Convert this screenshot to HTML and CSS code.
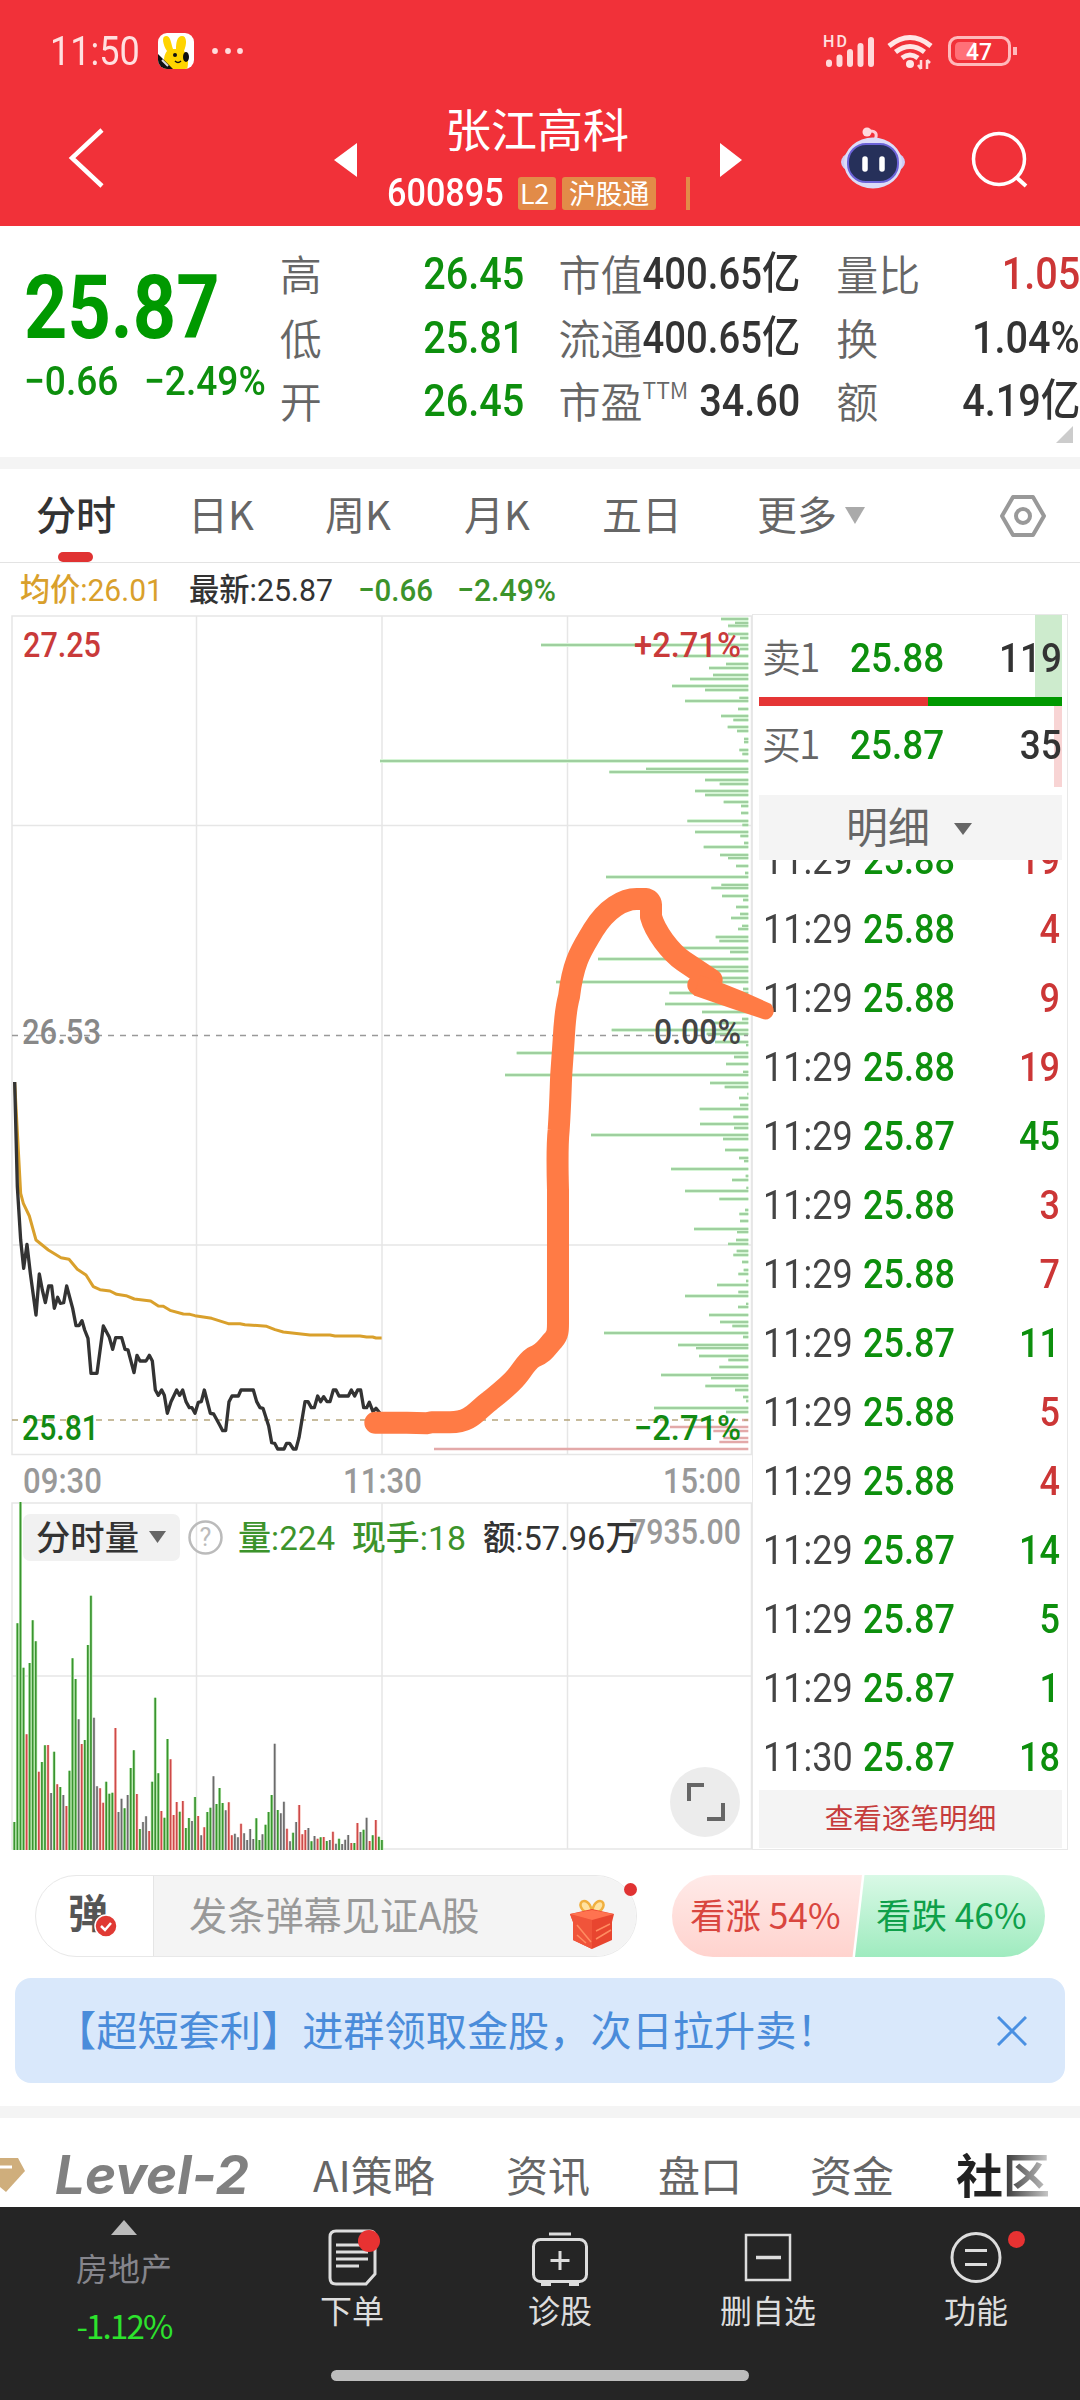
FILE: index.html
```html
<!DOCTYPE html>
<html lang="zh-CN">
	<head>
		<title>张江高科 600895</title>
		<meta charset="utf-8">
		<link rel="stylesheet" href="styles.css">
	</head>
	<body>
		<header class="top">
			<div class="status">
				<span class="num clock">11:50</span>
				<svg class="app-icon" viewBox="0 0 36 36" width="36" height="36">
					<clipPath id="appClip"><rect width="36" height="36" rx="9"/></clipPath>
					<g clip-path="url(#appClip)">
						<rect width="36" height="36" fill="#fff"/>
						<path d="M7 36C5 27 6 22 9 18 5 12 3 3 8 3c5 0 5 8 7 13h3c0-6 1-13 6-13 5 0 5 8 2 15 4 4 5 12 3 18z" fill="#ffd400"/>
						<path d="M0 21l15 15H0z" fill="#111"/>
						<path d="M4 27l6 6" stroke="#ddd" stroke-width="2"/>
						<ellipse cx="28" cy="24" rx="3" ry="5" fill="#111"/>
						<circle cx="17" cy="22" r="2" fill="#111"/>
						<path d="M17 28q3 3 6 0" stroke="#111" stroke-width="1.5" fill="none"/>
					</g>
				</svg>
				<svg class="more-dots" viewBox="0 0 32 6" width="32" height="6"><g fill="#ffdcdc"><circle cx="3" cy="3" r="2.9"/><circle cx="16" cy="3" r="2.9"/><circle cx="28" cy="3" r="2.9"/></g></svg>
				<svg class="signals" viewBox="822 30 198 42" width="198" height="42">
					<text x="823" y="47" class="hd" textLength="24">HD</text>
					<g stroke="#ffd9da" stroke-width="6" stroke-linecap="round">
						<path d="M829 62.500v1.500M839.500 57.500v6.500M850 52v12M860.500 46v18M871 40v24"/>
					</g>
					<g fill="none" stroke="#ffe6e6" stroke-width="5">
						<path d="M889 46q21-17 42 0M895.500 52q14.500-11 29 0M902 58q8-6 16 0"/>
					</g>
					<circle cx="910" cy="64" r="4" fill="#ffe6e6"/>
					<path d="M921 60v9M918 65l3 4M927 69v-9M930 63l-3-3" stroke="#ffd9da" stroke-width="2.500" fill="none"/>
					<rect x="949.500" y="37.500" width="60" height="27" rx="8" fill="none" stroke="#ffb9bb" stroke-width="3"/>
					<path d="M960 42h15v18h-15q-5 0-5-5v-8q0-5 5-5z" fill="#ff7078"/>
					<path d="M1015 47v8" stroke="#ffb9bb" stroke-width="4"/>
					<text x="966" y="59.500" class="batt" textLength="26" lengthAdjust="spacingAndGlyphs">47</text>
				</svg>
			</div>
			<div class="nav">
				<svg class="back" viewBox="0 0 40 64" width="40" height="64"><path d="M35 4L5 32 35 60" fill="none" stroke="#fff" stroke-width="4.500"/></svg>
				<svg class="prev" viewBox="0 0 24 34" width="24" height="34"><path d="M23 0v34L0 17z" fill="#fff"/></svg>
				<div class="stock">
					<h1>张江高科</h1>
					<div class="code">
						<span class="num">600895</span>
						<i class="tag tag-l2">L2</i>
						<i class="tag">沪股通</i>
						<i class="tag-cut"></i>
					</div>
				</div>
				<svg class="next" viewBox="0 0 24 34" width="24" height="34"><path d="M1 0v34l22-17z" fill="#fff"/></svg>
				<svg class="robot" viewBox="0 0 66 64" width="66" height="64">
					<path d="M35 14q4-9-5-9" fill="none" stroke="#ffcdd6" stroke-width="3"/>
					<circle cx="27" cy="6" r="4.500" fill="#ffd9de"/>
					<ellipse cx="33" cy="36" rx="32" ry="15" fill="#cfcdf5"/>
					<ellipse cx="33" cy="37" rx="29" ry="25.500" fill="#dcdcf8"/>
					<rect x="8" y="18" width="50" height="38" rx="18" fill="#26305a" stroke="#6c63d8" stroke-width="2"/>
					<path d="M25 33v10M42 33v10" stroke="#fff" stroke-width="5.500" stroke-linecap="round"/>
				</svg>
				<svg class="search" viewBox="0 0 60 60" width="60" height="60"><circle cx="28" cy="29" r="25.500" fill="none" stroke="#fff" stroke-width="3.500"/><path d="M45 47l10 9" stroke="#fff" stroke-width="4"/></svg>
			</div>
		</header>

		<section class="quote">
			<div class="price green">
				<div class="num last">25.87</div>
				<div class="change"><span class="num">−0.66</span><span class="num">−2.49%</span></div>
			</div>
			<dl class="col col-1">
				<div><dt>高</dt><dd class="num green">26.45</dd></div>
				<div><dt>低</dt><dd class="num green">25.81</dd></div>
				<div><dt>开</dt><dd class="num green">26.45</dd></div>
			</dl>
			<dl class="col col-2">
				<div><dt>市值</dt><dd class="num">400.65亿</dd></div>
				<div><dt>流通</dt><dd class="num">400.65亿</dd></div>
				<div><dt>市盈<sup>TTM</sup></dt><dd class="num">34.60</dd></div>
			</dl>
			<dl class="col col-3">
				<div><dt>量比</dt><dd class="num red">1.05</dd></div>
				<div><dt>换</dt><dd class="num">1.04%</dd></div>
				<div><dt>额</dt><dd class="num">4.19亿</dd></div>
			</dl>
			<i class="corner"></i>
		</section>
		<div class="band"></div>

		<nav class="periods">
			<span class="p active">分时</span>
			<span class="p">日K</span>
			<span class="p">周K</span>
			<span class="p">月K</span>
			<span class="p">五日</span>
			<span class="p">更多<i class="caret"></i></span>
			<svg class="gear" viewBox="0 0 46 44" width="46" height="44"><path d="M13 3h20l11 19-11 19H13L2 22z" fill="none" stroke="#999" stroke-width="4" stroke-linejoin="round"/><circle cx="23" cy="22" r="7" fill="none" stroke="#999" stroke-width="4"/></svg>
		</nav>

		<div class="legend">
			<svg viewBox="0 564 1080 50" width="1080" height="50">
				<g class="t" font-size="32">
					<g class="cjk-light"><text x="20" y="602" textLength="143" fill="#d9a02c">均价:26.01</text>
					<text x="189" y="602" textLength="144" fill="#333">最新:25.87</text></g>
					<text x="358" y="602" textLength="75" fill="#3c932b">−0.66</text>
					<text x="457" y="602" textLength="99" fill="#3c932b">−2.49%</text>
				</g>
			</svg>
		</div>

		<main class="market">
			<svg class="chart" viewBox="0 614 752 1236" width="752" height="1236">
				<g class="grid">
					<rect x="12" y="616" width="739.500" height="838.500"/>
					<rect x="12" y="1503" width="739.500" height="346"/>
					<path d="M196.500 616v838.500M382 616v838.500M567.500 616v838.500M12 825.500h740M12 1245h740"/>
					<path d="M196.500 1503v346M382 1503v346M567.500 1503v346M12 1676h740"/>
				</g>
				<g id="depth" transform="translate(360 600) scale(.33333)"></g>
				<path d="M12 1035.500H748" class="dash" stroke="#999"/>
				<path d="M12 1420H748" class="dash" stroke="#b5a57c"/>
				<g transform="translate(0 1060) scale(.33333)" class="lines">
					<path stroke="#d9a02c" stroke-width="9" d="M44 66 62 400 70 430 88 468 108 540 145 570 183 593 207 598 232 628 258 645 280 680 300 689 330 693 350 703 378 707 403 717 452 723 475 738 490 739 510 751 550 762 570 763 585 767 635 775 685 791 720 791 735 794 800 799 825 809 850 816 930 825 990 825 1005 828 1080 828 1100 831 1118 831 1128 834 1145 834"/>
					<path stroke="#333" stroke-width="10" d="M44 66 52 380 62 540 71 625 81 553 91 640 108 765 118 642 127 690 136 728 146 678 155 678 163 745 173 712 181 730 191 728 200 678 218 745 228 797 237 797 246 782 254 810 264 835 273 940 291 940 310 798 328 832 338 868 347 833 365 833 375 868 384 870 402 938 411 886 420 903 438 903 448 886 457 903 466 990 475 1006 485 990 493 1006 502 1060 513 1025 530 990 539 1006 548 990 558 1025 568 1043 576 1043 585 1060 595 1027 604 1025 613 990 631 1060 641 1062 659 1095 668 1112 677 1112 687 1025 696 1008 715 1008 723 990 760 990 770 1025 780 1043 789 1045 806 1098 815 1148 824 1150 833 1167 852 1167 860 1150 869 1150 880 1167 888 1167 897 1133 915 1025 924 1025 934 1043 943 1043 953 1008 962 1025 971 1010 981 1025 990 1025 1000 990 1008 990 1017 1008 1045 1008 1054 990 1064 1008 1073 990 1082 990 1091 1043 1100 1043 1108 1027 1119 1055 1128 1045 1140 1060"/>
				</g>
				<g id="volume" transform="translate(0 1480) scale(.33333)"></g>
				<g class="t" font-size="35">
					<text x="23" y="657" textLength="78" fill="#c93a3a">27.25</text>
					<text x="634" y="657" textLength="107" fill="#c93a3a">+2.71%</text>
					<text x="22" y="1044" textLength="79" fill="#888">26.53</text>
					<text x="654" y="1044" textLength="87" fill="#444">0.00%</text>
					<text x="22" y="1440" textLength="77" fill="#128a12">25.81</text>
					<text x="634" y="1440" textLength="107" fill="#128a12">−2.71%</text>
				</g>
				<g class="t" font-size="35" fill="#999">
					<text x="23" y="1493" textLength="79">09:30</text>
					<text x="343" y="1493" textLength="79">11:30</text>
					<text x="663" y="1493" textLength="78">15:00</text>
					<text x="629" y="1544" textLength="112">7935.00</text>
				</g>
				<rect x="23" y="1514" width="157" height="47" rx="7" fill="#f1f1f1"/>
				<path d="M149 1531h17l-8.500 12z" fill="#666"/>
				<circle cx="205.500" cy="1537.500" r="16" fill="none" stroke="#bbb" stroke-width="2.500"/>
				<text x="205.500" y="1546" class="help">?</text>
				<g class="t cjk-light" font-size="34">
					<text x="36" y="1550" textLength="103" fill="#333">分时量</text>
					<text x="238" y="1550" textLength="97" fill="#3c932b">量:224</text>
					<text x="352" y="1550" textLength="114" fill="#3c932b">现手:18</text>
					<text x="483" y="1550" textLength="155" fill="#333">额:57.96万</text>
				</g>
				<circle cx="705" cy="1802" r="35" fill="#ececec"/>
				<path d="M689 1801v-16h15M723 1803v16h-16" fill="none" stroke="#666" stroke-width="4"/>
			</svg>

			<aside class="book">
				<div class="level sell"><b>卖1</b><span class="num green">25.88</span><em class="num">119</em></div>
				<div class="ratio"></div>
				<div class="level buy"><b>买1</b><span class="num green">25.87</span><em class="num">35</em></div>
				<div class="detail">明细<i class="caret"></i></div>
				<div class="trades">
					<div class="trade"><span class="num">11:29</span><span class="num green">25.88</span><span class="num red">19</span></div>
					<div class="trade"><span class="num">11:29</span><span class="num green">25.88</span><span class="num red">4</span></div>
					<div class="trade"><span class="num">11:29</span><span class="num green">25.88</span><span class="num red">9</span></div>
					<div class="trade"><span class="num">11:29</span><span class="num green">25.88</span><span class="num red">19</span></div>
					<div class="trade"><span class="num">11:29</span><span class="num green">25.87</span><span class="num green">45</span></div>
					<div class="trade"><span class="num">11:29</span><span class="num green">25.88</span><span class="num red">3</span></div>
					<div class="trade"><span class="num">11:29</span><span class="num green">25.88</span><span class="num red">7</span></div>
					<div class="trade"><span class="num">11:29</span><span class="num green">25.87</span><span class="num green">11</span></div>
					<div class="trade"><span class="num">11:29</span><span class="num green">25.88</span><span class="num red">5</span></div>
					<div class="trade"><span class="num">11:29</span><span class="num green">25.88</span><span class="num red">4</span></div>
					<div class="trade"><span class="num">11:29</span><span class="num green">25.87</span><span class="num green">14</span></div>
					<div class="trade"><span class="num">11:29</span><span class="num green">25.87</span><span class="num green">5</span></div>
					<div class="trade"><span class="num">11:29</span><span class="num green">25.87</span><span class="num green">1</span></div>
					<div class="trade"><span class="num">11:30</span><span class="num green">25.87</span><span class="num green">18</span></div>
				</div>
				<div class="all-trades">查看逐笔明细</div>
			</aside>

			<!-- marker line drawn by hand over the chart -->
			<svg class="marker" viewBox="0 614 1080 1236" width="1080" height="1236">
				<g transform="translate(360 1040) scale(.33333)">
					<path d="M46 1148H140L200 1150 215 1147H270C335 1147 350 1110 390 1082 420 1058 450 1035 470 1010 490 985 500 965 520 952 555 938 560 920 580 900 594 885 594 870 594 850V450C592 380 593 300 596 270 602 180 602 130 604 100L611 0C613-40 616-90 627-130 640-240 665-270 700-330 740-395 790-423 830-423H855Q872-421 873-405V-370C885-325 930-265 970-237L1055-180 1015-165"/>
				</g>
				<path d="M700 975L722 983 742 991 771 1004Q777 1012 770 1018 766 1021 760 1018L730 1008 694 995.500z" fill="#ff7b45"/>
			</svg>
		</main>

		<section class="social">
			<div class="danmu">
				<div class="danmu-switch">弹
					<svg viewBox="0 0 24 24" width="24" height="24"><circle cx="12" cy="12" r="11" fill="#e03a34" stroke="#fff" stroke-width="1.500"/><path d="M7 12l4 4 6-7" fill="none" stroke="#fff" stroke-width="2.500"/></svg>
				</div>
				<div class="danmu-input">发条弹幕见证A股</div>
				<svg class="gift" viewBox="0 0 46 52" width="46" height="52">
					<path d="M23 14C10 14 9 2 15 2c5 0 8 7 8 12zM23 14C36 14 37 2 31 2c-5 0-8 7-8 12z" fill="#ffe2a0" stroke="#f0b040" stroke-width="2.500"/>
					<path d="M1 15l22-5 22 5-2 8v18L23 50 4 41V23z" fill="#e8452f"/>
					<path d="M1 15l22 6v29L4 41V23z" fill="#f0543a"/>
					<path d="M1 15l22-4 22 4-22 6z" fill="#ff7350"/>
					<path d="M8 26l14 17M8 36l9 8M27 32l14-7M27 40l15-9" stroke="#ff8b60" stroke-width="1.500"/>
				</svg>
				<i class="dot"></i>
			</div>
			<div class="vote"><span class="up">看涨 54%</span><span class="down">看跌 46%</span></div>
		</section>

		<div class="banner">
			<span>【超短套利】进群领取金股，次日拉升卖！</span>
			<svg viewBox="0 0 30 30" width="30" height="30"><path d="M1 1l28 28M29 1L1 29" stroke="#4a90e2" stroke-width="3"/></svg>
		</div>
		<div class="band"></div>

		<nav class="sections">
			<svg class="diamond" viewBox="0 0 26 36" width="26" height="36"><path d="M0 1h18l7 13L6 35 0 30z" fill="#cfae7c"/><path d="M0 10h12" stroke="#fff" stroke-width="3"/></svg>
			<b class="level2">Level-2</b>
			<span>AI策略</span>
			<span>资讯</span>
			<span>盘口</span>
			<span>资金</span>
			<strong>社区</strong>
		</nav>

		<footer class="bottom">
			<div class="item sector">
				<i class="up-caret"></i>
				<span>房地产</span>
				<em>-1.12%</em>
			</div>
			<div class="item">
				<svg viewBox="0 0 60 60" width="60" height="60"><g fill="none" stroke="#ddd" stroke-width="3"><path d="M14 4h34q5 0 5 5v38l-9 10H14q-6 0-6-6V10q0-6 6-6z"/><path d="M14 18h32M14 25h32M14 32h32M14 39h23"/></g></svg>
				<i class="badge big"></i>
				<span>下单</span>
			</div>
			<div class="item">
				<svg viewBox="0 0 60 60" width="60" height="60"><g fill="none" stroke="#ddd" stroke-width="3"><path d="M19 7h22"/><rect x="3.500" y="12.500" width="53" height="42" rx="7"/><path d="M30 24v19M20.500 33.500h19"/><path d="M11 57h10M39 57h10" stroke-width="4"/></g></svg>
				<span>诊股</span>
			</div>
			<div class="item">
				<svg viewBox="0 0 60 60" width="60" height="60"><g fill="none" stroke="#ddd" stroke-width="2.500"><rect x="8" y="8" width="44" height="45"/><path d="M18 30.500h25" stroke-width="3.500"/></g></svg>
				<span>删自选</span>
			</div>
			<div class="item">
				<svg viewBox="0 0 60 60" width="60" height="60"><g fill="none" stroke="#ddd" stroke-width="3"><circle cx="30" cy="30.500" r="24"/><path d="M19 23.500h22M19 37.500h22"/></g></svg>
				<i class="badge"></i>
				<span>功能</span>
			</div>
			<i class="home-bar"></i>
		</footer>

		<script src="script.js"></script>
	</body>
</html>
```

FILE: styles.css
```css
* {
	box-sizing: border-box;
}

body {
	margin: 0;
	width: 1080px;
	height: 2400px;
	overflow: hidden;
	background: #fff;
	color: #333;
	font-family: "Noto Sans CJK SC", sans-serif;
}

h1, dl, dd {
	margin: 0;
}

i, em {
	font-style: normal;
}

svg {
	display: block;
	flex: none;
}

/* condensed figures */
.num {
	display: inline-block;
	font-family: Roboto, "Noto Sans CJK SC", sans-serif;
	font-weight: 500;
	white-space: nowrap;
	transform: scaleX(.9);
	transform-origin: 0 50%;
}

.green {
	color: #0d8f0d;
}

.red {
	color: #cc3636;
}

.caret {
	display: inline-block;
	border: 10px solid transparent;
	border-top: 17px solid #aaa;
	border-bottom: 0;
}

.band {
	height: 12px;
	background: #f4f4f4;
}

/* header */
.top {
	height: 226px;
	background: #f13139;
	color: #fff;
}

.status {
	display: flex;
	align-items: center;
	height: 102px;
	padding: 0 60px 0 50px;
}

.clock {
	width: 108px;
	font-size: 40px;
	font-weight: 400;
	color: #ffe0e0;
}

.more-dots {
	margin-left: 18px;
}

.signals {
	margin-left: auto;
}

.hd {
	font: 500 16px Roboto, sans-serif;
	fill: #ffe0e0;
}

.batt {
	font: 500 23px Roboto, sans-serif;
	fill: #fff;
}

.nav {
	display: flex;
	height: 124px;
}

.back {
	margin: 24px 0 0 67px;
}

.prev {
	margin: 41px 0 0 227px;
}

.stock {
	width: 332px;
	margin-left: 29px;
}

h1 {
	width: 300px;
	height: 66px;
	font-size: 46px;
	font-weight: 400;
	line-height: 51px;
	text-align: center;
}

.code {
	display: flex;
	height: 50px;
	align-items: center;
	margin-top: 0;
}

.code .num {
	width: 131px;
	font-size: 38px;
}

.tag {
	height: 33px;
	padding: 0 7px;
	background: #e28b48;
	border-radius: 3px;
	font-size: 27px;
	line-height: 31px;
	letter-spacing: -.4px;
}

.tag-l2 {
	width: 38px;
	margin-right: 6px;
	padding: 0 2px;
}

.tag-cut {
	width: 4px;
	height: 33px;
	margin-left: 30px;
	background: #e28b48;
}

.next {
	margin: 41px 0 0 0;
}

.robot {
	margin: 24px 0 0 97px;
}

.search {
	margin: 28px 0 0 65px;
}

/* quote */
.quote {
	position: relative;
	display: flex;
	height: 231px;
	padding-top: 18px;
}

.price {
	width: 280px;
	padding-left: 24px;
}

.last {
	height: 100px;
	margin-top: 12px;
	font-size: 89px;
	font-weight: 700;
	line-height: 103px;
	transform: scaleX(.85);
	color: #009900;
}

.change {
	display: flex;
	margin-top: 2px;
	font-size: 41px;
	line-height: 46px;
}

.change .num {
	width: 120px;
	transform: scaleX(.905);
}

.col > div {
	display: flex;
	justify-content: space-between;
	height: 63.5px;
	font-size: 42px;
	line-height: 61px;
}

.col dt {
	position: relative;
	top: -2px;
	font-size: 42px;
	font-weight: 350;
	color: #666;
	white-space: nowrap;
}

.col dd {
	transform-origin: 100% 50%;
	font-size: 44px;
}

.col-1 {
	width: 245px;
}

.col-2 {
	width: 242px;
	margin-left: 34px;
}

.col-2 dd {
	margin-left: -30px;
	transform: scaleX(.87);
}

.col-2 div:last-child dd {
	transform: scaleX(.9);
}

.col-3 {
	width: 244px;
	margin-left: 36px;
}

.col sup {
	position: absolute;
	top: -10px;
	font-size: 23px;
}

.corner {
	position: absolute;
	right: 7px;
	bottom: 14px;
	border-left: 17px solid transparent;
	border-bottom: 17px solid #ccc;
}

/* period tabs */
.periods {
	display: flex;
	height: 94px;
	padding-left: 36px;
	border-bottom: 1px solid #e3e3e3;
	color: #666;
	font-size: 40px;
	line-height: 88px;
	white-space: nowrap;
}

.p {
	width: 139px;
}

.p:nth-child(1) {
	width: 152px;
}

.p:nth-child(4) {
	width: 138px;
}

.p:nth-child(5) {
	width: 155px;
}

.p:nth-child(2) {
	width: 137px;
}

.p .caret {
	margin: 0 0 6px 8px;
}

.active {
	position: relative;
	color: #333;
	font-weight: 500;
}

.active::after {
	content: "";
	position: absolute;
	left: 22px;
	bottom: 0;
	width: 35px;
	height: 10px;
	border-radius: 5px;
	background: #e03232;
}

.gear {
	margin: 25px 0 0 104px;
}

.legend {
	height: 51px;
}

/* chart */
.t {
	font-family: Roboto, "Noto Sans CJK SC", sans-serif;
	font-weight: 500;
}

.cjk-light {
	font-weight: 450;
}

.grid {
	fill: none;
	stroke: #e6e6e6;
	stroke-width: 1.5;
}

.dash {
	stroke-width: 1.5;
	stroke-dasharray: 6 6;
}

.lines {
	fill: none;
	stroke-linejoin: round;
}

.help {
	font: 400 25px Roboto, sans-serif;
	fill: #bbb;
	text-anchor: middle;
}

.market {
	position: relative;
	display: flex;
	height: 1236px;
}

.marker {
	position: absolute;
	left: 0;
	top: 0;
}

.marker g {
	fill: none;
	stroke: #ff7b45;
	stroke-width: 66;
	stroke-linecap: round;
	stroke-linejoin: round;
}

/* order book */
.book {
	width: 316px;
	padding: 0 5px 0 6px;
	border: 1px solid #e8e8e8;
}

.level {
	display: flex;
	height: 82px;
	padding-left: 3px;
	font-size: 41px;
	line-height: 86px;
	background: linear-gradient(#cdebcd, #cdebcd) right / 27px 100% no-repeat;
}

.buy {
	height: 81px;
	line-height: 78px;
	background: linear-gradient(#f8d4d4, #f8d4d4) right / 8px 100% no-repeat;
}

.level b {
	position: relative;
	top: -3px;
	width: 88px;
	font-size: 39px;
	font-weight: 350;
	letter-spacing: -2px;
	color: #666;
}

.level em {
	margin-left: auto;
	transform-origin: 100% 50%;
}

.ratio {
	height: 9px;
	background: linear-gradient(90deg, #e53535 169px, #009900 169px);
}

.detail {
	height: 65px;
	margin-top: 8px;
	padding-left: 87px;
	background: #f4f4f4;
	color: #666;
	font-size: 42px;
	line-height: 60px;
}

.detail .caret {
	margin: 0 0 8px 24px;
	border-width: 12px 9px 0;
	border-top-color: #666;
}

.trades {
	display: flex;
	flex-direction: column;
	justify-content: flex-end;
	height: 930px;
	overflow: hidden;
}

.trade {
	display: grid;
	flex: none;
	grid-template-columns: 100px 111px 1fr;
	height: 69px;
	padding: 0 2px 0 4px;
	font-size: 40px;
	line-height: 74px;
}

.trade .num:first-child {
	font-weight: 450;
	color: #444;
}

.trade .num:last-child {
	text-align: right;
	transform-origin: 100% 50%;
}

.all-trades {
	height: 58px;
	background: #f4f4f4;
	color: #c63c3c;
	font-size: 28.6px;
	line-height: 54px;
	text-align: center;
}

/* danmu */
.social {
	display: flex;
	padding: 25px 35px 0;
}

.danmu {
	position: relative;
	display: flex;
	width: 602px;
	height: 82px;
	border: 1px solid #e8e8e8;
	border-radius: 41px;
	line-height: 75px;
}

.danmu-switch {
	position: relative;
	width: 118px;
	padding-left: 32px;
	border-right: 1px solid #e5e5e5;
	font-size: 40px;
	font-weight: 700;
	line-height: 70px;
	color: #555;
}

.danmu-switch svg {
	position: absolute;
	left: 58px;
	top: 38px;
}

.danmu-input {
	flex: 1;
	padding-left: 35px;
	border-radius: 0 41px 41px 0;
	background: #f4f4f4;
	color: #999;
	font-size: 38.2px;
}

.gift {
	position: absolute;
	left: 533px;
	top: 23px;
}

.dot {
	position: absolute;
	right: -1px;
	top: 7px;
	width: 13px;
	height: 13px;
	border-radius: 50%;
	background: #e03232;
}

.vote {
	display: flex;
	width: 373px;
	height: 82px;
	margin-left: 35px;
	border-radius: 41px;
	overflow: hidden;
	font-size: 35.4px;
	line-height: 77px;
	white-space: nowrap;
}

.up {
	width: 190px;
	padding-left: 18px;
	background: linear-gradient(#ffeae8, #ffd3ce);
	color: #d9463f;
	clip-path: polygon(0 0, 100% 0, 95% 100%, 0 100%);
}

.down {
	width: 190px;
	margin-left: -7px;
	padding-left: 21px;
	background: linear-gradient(#d9f9e6, #9febbf);
	color: #0fa04a;
	clip-path: polygon(5% 0, 100% 0, 100% 100%, 0 100%);
}

.banner {
	display: flex;
	align-items: center;
	justify-content: space-between;
	height: 105px;
	margin: 21px 15px 23px;
	padding: 0 38px 0 40px;
	border-radius: 16px;
	background: #d9e8fb;
	color: #4a8cda;
	font-size: 41.2px;
	white-space: nowrap;
}

.banner span {
	line-height: 60px;
	padding-bottom: 5px;
}

/* section tabs */
.sections {
	position: relative;
	display: flex;
	height: 89px;
	color: #666;
	font-size: 42px;
	line-height: 112px;
	white-space: nowrap;
	overflow: hidden;
}

.diamond {
	margin-top: 39px;
}

.sections .level2 {
	width: 287px;
	padding-left: 29px;
	font-family: Inter, "Liberation Sans", sans-serif;
	font-size: 53px;
	font-style: italic;
	line-height: 114px;
	color: #808080;
}

.sections span {
	width: 152px;
}

.sections .level2 + span {
	width: 193px;
}

.sections strong {
	margin-left: -6px;
	background: linear-gradient(90deg, #222 45%, #ccc);
	background-clip: text;
	-webkit-background-clip: text;
	color: transparent;
	font-size: 47px;
	font-weight: 600;
	line-height: 110px;
}

/* bottom bar */
.bottom {
	position: relative;
	display: flex;
	height: 193px;
	padding-left: 20px;
	background: #252525;
	color: #ddd;
}

.item {
	position: relative;
	display: flex;
	flex-direction: column;
	align-items: center;
	width: 208px;
	padding-top: 20px;
	font-size: 32px;
	line-height: 44px;
}

.sector {
	width: 228px;
	padding: 13px 20px 0 0;
	color: #85858c;
}

.sector span {
	margin-top: 10px;
}

.sector em {
	margin-top: 14px;
	color: #2de32d;
	font-size: 33px;
	letter-spacing: -1.8px;
}

.up-caret {
	border: 13px solid transparent;
	border-top: 0;
	border-bottom: 15px solid #bbb;
}

.badge {
	position: absolute;
	left: 136px;
	top: 24px;
	width: 17px;
	height: 17px;
	border-radius: 50%;
	background: #e83232;
}

.badge.big {
	left: 110px;
	top: 23px;
	width: 22px;
	height: 22px;
}

.home-bar {
	position: absolute;
	left: 331px;
	bottom: 19px;
	width: 418px;
	height: 11px;
	border-radius: 6px;
	background: #bdbdbd;
}
```

FILE: script.js
```js
const NS = 'http://www.w3.org/2000/svg';

const addPath = (parent, d, stroke, width) => {
	const path = document.createElementNS(NS, 'path');
	path.setAttribute('d', d);
	path.setAttribute('stroke', stroke);
	path.setAttribute('stroke-width', width);
	parent.appendChild(path);
}

// order depth: y, left end of the bar
const asks = '57,1083 69,1125 77,1104 102,1104 114,1140 135,543 147,1140 168,945 192,1098 204,1047 225,1059 237,990 258,936 270,1035 294,1138 303,975 327,1134 348,1083 360,1120 381,1103 393,1131 417,1152 426,1152 450,1138 462,1147 483,60 507,858 516,748 540,1035 552,1079 573,1005 585,1035 606,1091 618,1143 639,1143 663,982 675,1147 696,1005 708,1141 729,1152 741,1031 765,1080 774,1104 798,1128 819,1155 831,738 855,1084 864,1054 888,1086 900,1149 921,1128 942,1140 954,1113 978,1146 987,1134 1011,1067 1023,1078 1044,960 1056,1110 1077,714 1101,1050 1113,1050 1134,1080 1146,588 1167,1149 1179,928 1212,915 1236,1026 1257,1146 1269,1050 1290,755 1302,1040 1326,1065 1335,1158 1359,470 1371,1122 1392,1098 1416,1149 1425,435 1449,1050 1461,1094 1482,1162 1494,1137 1515,1140 1527,1019 1551,1120 1572,1020 1584,1122 1605,693 1617,1089 1650,1095 1674,1137 1683,1152 1707,933 1728,1157 1740,1116 1764,1159 1773,975 1797,1078 1830,1155 1842,1138 1863,1140 1887,1002 1896,1131 1920,1128 1932,1104 1953,1130 1965,1120 1986,1146 2010,1151 2022,1135 2043,1158 2055,1071 2076,1135 2088,975 2112,1158 2121,1134 2145,1047 2166,1080 2178,1117 2199,732 2211,1149 2235,954 2244,1008 2268,1017 2280,1105 2301,1078 2325,903 2334,1053 2358,1036 2370,1125 2391,1149 2403,1158 2424,882 2436,1098';
const bids = '2460,1146 2481,930 2493,1060 2514,1090 2526,1078 2547,222';

const depth = document.getElementById('depth');
const rows = list => list.split(' ').map(p => p.split(',')).map(([y, x]) => `M1165 ${y}H${x}`).join('');
addPath(depth, rows(asks), '#d6f5d6', 12);
addPath(depth, rows(asks), '#9fcf9f', 6);
addPath(depth, rows(bids), '#e3a9a9', 7);

// one bar a minute: colour, top edge
const minutes = 'g1026 g430 g66 g563 r763 g549 g421 g484 r875 g846 g796 r795 k939 g815 r913 g921 k945 r978 g872 g535 g597 k718 r792 g780 g495 g347 k713 k919 r925 r968 g905 g941 g938 r744 k996 k956 g985 k945 g864 g811 r942 g1047 k1026 k1009 r1053 g905 g653 g880 r993 g1013 g777 r838 r1005 r966 g995 r963 g1044 g1014 k1023 g951 r1008 k1066 r1042 g996 g983 k889 g972 g924 g969 k991 r967 r1066 k1061 k1072 r1031 k1060 k1080 k1047 k1077 g1015 g1080 k1063 g1034 g996 g945 k791 g990 k1000 k965 r1046 k1084 g1058 k1026 r975 r1063 r1050 k1044 g1084 k1068 r1076 g1072 r1071 g1083 k1080 r1055 k1091 g1076 k1092 k1079 k1065 r1089 g1089 r1029 k1056 g1049 k1013 r1083 g1066 r1020 g1070 g1080'.split(' ');

const colors = {
	g: ['#bdebb4', '#3a9430'],
	r: ['#ffd0c8', '#cc4a4a'],
	k: ['#dedede', '#6b6b6b']
};
const volume = document.getElementById('volume');
const bars = c => minutes.map((m, i) => m[0] == c ? `M${(43 + 9.19 * i).toFixed(1)} 1110V${m.slice(1)}` : '').join('');
for (let c in colors) addPath(volume, bars(c), colors[c][0], 9);
for (let c in colors) addPath(volume, bars(c), colors[c][1], 5);

// squeeze the labels evenly, glyphs included
for (let text of document.querySelectorAll('.t text')) {
	text.setAttribute('lengthAdjust', 'spacingAndGlyphs');
}
```
